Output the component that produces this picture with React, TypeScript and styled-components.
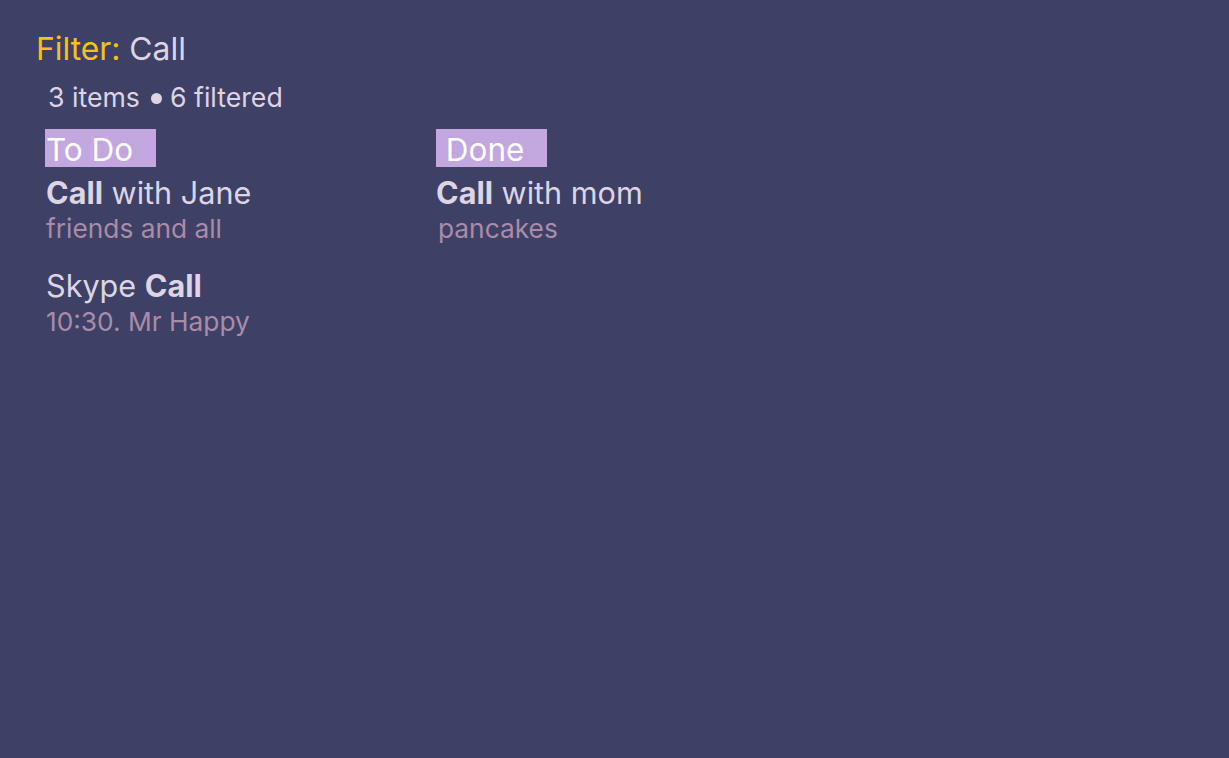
import React from "react";
import styled, { createGlobalStyle } from "styled-components";

const Global = createGlobalStyle`
  html, body { margin: 0; padding: 0; background: #3e4066; }
  body { font-family: Inter, "Noto Sans", sans-serif; }
`;

const Page = styled.div`
  width: 1229px;
  height: 758px;
  box-sizing: border-box;
  background: #3e4066;
  padding: 30px 0 0 36px;
  display: flex;
  flex-direction: column;
`;

const FilterLine = styled.div`
  font-size: 31.8px;
  line-height: 38px;
  color: #ddd4e4;
`;

const FilterLabel = styled.span`
  color: #f5c21b;
`;

const Meta = styled.div`
  margin: 13px 0 0 12px;
  font-size: 26.7px;
  line-height: 32px;
  color: #ddd4e4;
  display: flex;
  align-items: center;
`;

const Dot = styled.span`
  display: inline-block;
  width: 11px;
  height: 11px;
  border-radius: 50%;
  background: #ddd4e4;
  margin: 2px 8px 0 11px;
`;

const Columns = styled.div`
  display: grid;
  grid-template-columns: 391px 391px;
  margin: 16px 0 0 9px;
`;

const Column = styled.div`
  display: flex;
  flex-direction: column;
`;

const Label = styled.div`
  width: 111px;
  height: 38px;
  background: #c3a7df;
  color: #ffffff;
  font-size: 31.5px;
  line-height: 41px;
  white-space: pre;
  padding-left: 1px;
  box-sizing: border-box;
`;

const Item = styled.div<{ $shift?: number }>`
  display: flex;
  flex-direction: column;
  margin-top: 7px;
  margin-bottom: 16px;
  padding-left: ${(p) => p.$shift ?? 0}px;
`;

const Title = styled.div`
  font-size: 30.6px;
  line-height: 38px;
  color: #ddd4e4;
  b { font-weight: 700; }
`;

const Sub = styled.div<{ $indent?: number }>`
  margin-top: 2px;
  font-size: 26.3px;
  line-height: 30px;
  color: #a98ca9;
  padding-left: ${(p) => p.$indent ?? 0}px;
`;

export default function App() {
  return (
    <>
      <Global />
      <Page>
        <FilterLine>
          <FilterLabel>Filter:</FilterLabel> Call
        </FilterLine>
        <Meta>
          3 items<Dot />6 filtered
        </Meta>
        <Columns>
          <Column>
            <Label>To Do</Label>
            <Item $shift={1}>
              <Title>
                <b>Call</b> with Jane
              </Title>
              <Sub>friends and all</Sub>
            </Item>
            <Item $shift={1}>
              <Title>
                Skype <b>Call</b>
              </Title>
              <Sub>10:30. Mr Happy</Sub>
            </Item>
          </Column>
          <Column>
            <Label>{" Done"}</Label>
            <Item>
              <Title>
                <b>Call</b> with mom
              </Title>
              <Sub $indent={2}>pancakes</Sub>
            </Item>
          </Column>
        </Columns>
      </Page>
    </>
  );
}
